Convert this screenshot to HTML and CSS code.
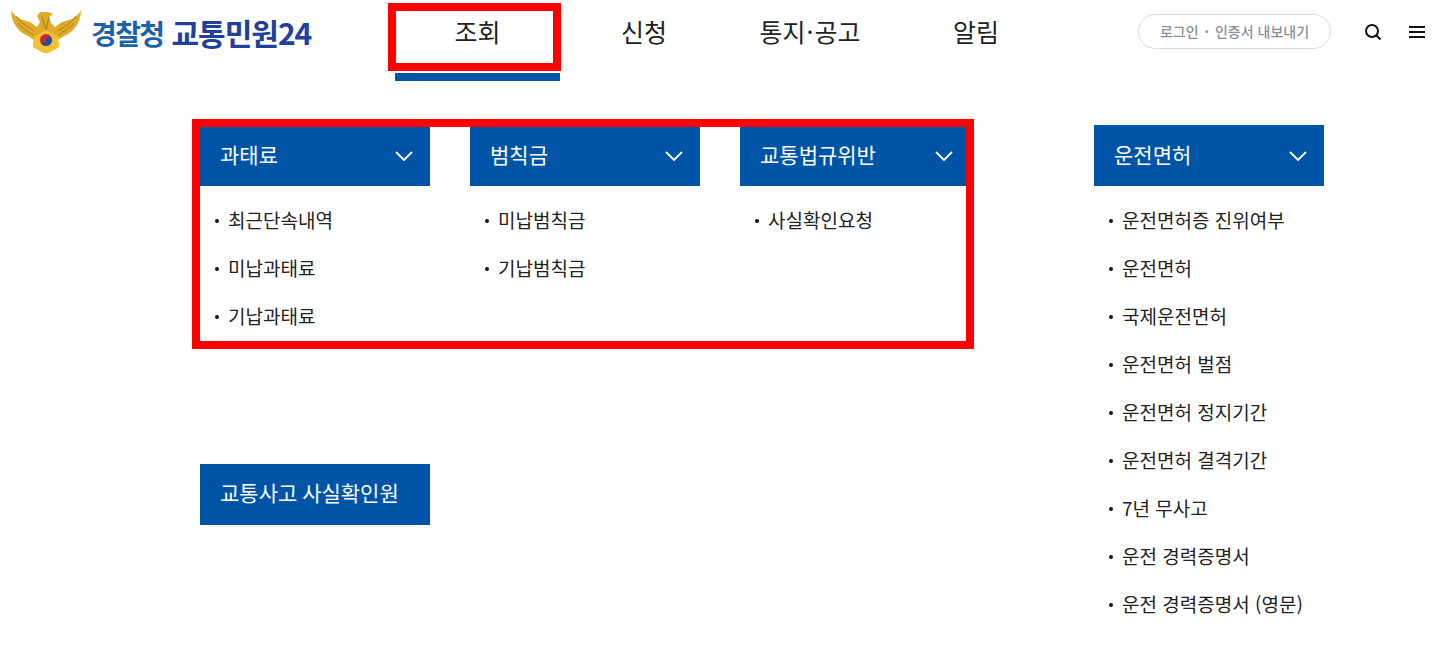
FILE: index.html
```html
<!DOCTYPE html>
<html lang="ko">
<head>
<meta charset="utf-8">
<title>경찰청 교통민원24</title>
<link rel="stylesheet" href="styles.css">
</head>
<body>
<header class="top">
  <a class="logo" href="#">
    <svg class="emblem" width="72" height="44" viewBox="0 0 72 44">
      <path d="M1 0 C4 7 12 10 20 12 L27 17 L30 12 L27 6 L30 2 L38 2 L43 4 L39 7 L41 13 L45 17 L52 12 C60 10 68 7 71 0 C71 12 64 22 54 26 L48 30 L49 37 L38 43 L34 43 L23 37 L24 30 L18 26 C8 22 1 12 1 0 Z" fill="#e0ab28"/>
      <path d="M6 6 C10 13 17 16 24 21 M66 6 C62 13 55 16 48 21 M8 13 C13 19 18 21 23 25 M64 13 C59 19 54 21 49 25 M32 7 L36 20 L39 7" fill="none" stroke="#a47c1c" stroke-width="1"/>
      <path d="M24 27 L36 20 L48 27 L49 37 L38 43 L34 43 L23 37 Z" fill="#f2c232"/>
      <circle cx="36" cy="30" r="6" fill="#c8283a"/>
      <path d="M30 30 A6 6 0 0 0 42 30 A3 3 0 0 0 36 30 A3 3 0 0 1 30 30 Z" fill="#1f4f9c"/>
    </svg>
    <span class="logo-a">경찰청</span>
    <span class="logo-b">교통민원24</span>
  </a>
  <nav class="gnb">
    <a class="gnb-item is-active" href="#">조회</a>
    <a class="gnb-item" href="#">신청</a>
    <a class="gnb-item" href="#">통지<span class="mid">·</span>공고</a>
    <a class="gnb-item" href="#">알림</a>
  </nav>
  <div class="utils">
    <a class="login" href="#">로그인 <i class="dot">·</i> 인증서 내보내기</a>
    <svg class="icon-search" width="18" height="18" viewBox="0 0 18 18"><circle cx="8" cy="8" r="6" fill="none" stroke="#111" stroke-width="2"/><path d="M12.5 12.5 L16.5 16.5" stroke="#111" stroke-width="2"/></svg>
    <svg class="icon-menu" width="16" height="14" viewBox="0 0 16 14"><path d="M0 2 H16 M0 7 H16 M0 12 H16" stroke="#111" stroke-width="2"/></svg>
  </div>
</header>
<main class="menu">
  <div class="group">
    <section class="col">
      <h2 class="col-head">과태료<svg class="chev" width="18" height="10" viewBox="0 0 18 10"><path d="M1 1 L9 9 L17 1" fill="none" stroke="#fff" stroke-width="1.8"/></svg></h2>
      <ul class="list">
        <li>최근단속내역</li>
        <li>미납과태료</li>
        <li>기납과태료</li>
      </ul>
    </section>
    <section class="col">
      <h2 class="col-head">범칙금<svg class="chev" width="18" height="10" viewBox="0 0 18 10"><path d="M1 1 L9 9 L17 1" fill="none" stroke="#fff" stroke-width="1.8"/></svg></h2>
      <ul class="list">
        <li>미납범칙금</li>
        <li>기납범칙금</li>
      </ul>
    </section>
    <section class="col col-narrow">
      <h2 class="col-head">교통법규위반<svg class="chev" width="18" height="10" viewBox="0 0 18 10"><path d="M1 1 L9 9 L17 1" fill="none" stroke="#fff" stroke-width="1.8"/></svg></h2>
      <ul class="list">
        <li>사실확인요청</li>
      </ul>
    </section>
    <a class="col-head col-single" href="#">교통사고 사실확인원</a>
  </div>
  <section class="col col-last">
    <h2 class="col-head">운전면허<svg class="chev" width="18" height="10" viewBox="0 0 18 10"><path d="M1 1 L9 9 L17 1" fill="none" stroke="#fff" stroke-width="1.8"/></svg></h2>
    <ul class="list">
      <li>운전면허증 진위여부</li>
      <li>운전면허</li>
      <li>국제운전면허</li>
      <li>운전면허 벌점</li>
      <li>운전면허 정지기간</li>
      <li>운전면허 결격기간</li>
      <li>7년 무사고</li>
      <li>운전 경력증명서</li>
      <li>운전 경력증명서 (영문)</li>
    </ul>
  </section>
</main>
<div class="mark mark-nav"></div>
<div class="mark mark-cols"></div>
</body>
</html>
```
FILE: styles.css
```css
* { box-sizing: border-box; }
html, body { margin: 0; padding: 0; }
body {
  width: 1443px;
  height: 649px;
  overflow: hidden;
  background: #fff;
  color: #222;
  font-family: "Noto Sans CJK KR", "Noto Sans", sans-serif;
  position: relative;
}
a { color: inherit; text-decoration: none; }
.top {
  display: flex;
  height: 81px;
  align-items: flex-start;
}
.logo {
  display: flex;
  width: 395px;
  padding: 10px 0 0 10px;
  align-items: baseline;
  font-weight: 700;
  line-height: 45px;
}
.emblem { flex: none; margin-right: 9px; align-self: flex-start; }
.logo-a { color: #1c62a8; margin-right: 8px; font-size: 28px; letter-spacing: -1.6px; }
.logo-b { color: #22409a; font-size: 30px; letter-spacing: -1px; }
.gnb { display: flex; }
.gnb-item {
  width: 166px;
  height: 81px;
  text-align: center;
  font-size: 25px;
  line-height: 62px;
  color: #222;
  font-weight: 400;
}
.mid { margin: 0 1px; }
.is-active { border-bottom: 8px solid #0054a6; width: 165px; margin-right: 1px; }
.utils {
  display: flex;
  align-items: center;
  margin-left: 79px;
  padding-top: 14px;
}
.login {
  width: 193px;
  height: 35px;
  border: 1px solid #d5dbe8;
  border-radius: 18px;
  text-align: center;
  font-size: 14px;
  line-height: 32px;
  color: #8a8f9a;
  font-weight: 500;
  white-space: pre;
}
.dot { font-style: normal; font-weight: 700; margin: 0 2px; }
.icon-search { margin-left: 33px; }
.icon-menu { margin-left: 27px; }
.menu {
  display: flex;
  padding: 44px 0 0 200px;
  align-items: flex-start;
}
.group {
  display: grid;
  grid-template-columns: 230px 230px 226px;
  column-gap: 40px;
  row-gap: 120px;
  width: 894px;
  grid-template-rows: 219px auto;
}
.col { width: 230px; }
.col-narrow { width: 226px; }
.col-narrow .col-head { padding-right: 13px; }
.col-head {
  display: flex;
  margin: 0;
  height: 61px;
  padding: 0 17px 4px 20px;
  align-items: center;
  justify-content: space-between;
  background: #0054a6;
  color: #fff;
  font-size: 21px;
  font-weight: 400;
}
.col-single { grid-column: 1; height: 61px; width: 230px; padding-bottom: 5px; word-spacing: -1px; }
.chev { flex: none; margin-top: 4px; }
.list {
  list-style: none;
  margin: 0;
  padding: 10px 0 0 28px;
}
.list li {
  position: relative;
  height: 48px;
  font-size: 19px;
  line-height: 48px;
  color: #222;
  white-space: nowrap;
}
.list li::before {
  content: "";
  position: absolute;
  left: -13px;
  top: 23px;
  width: 4px;
  height: 4px;
  border-radius: 50%;
  background: #111;
}
.mark {
  position: absolute;
  border: 8px solid #f00;
  pointer-events: none;
}
.mark-nav { left: 388px; top: 3px; width: 173px; height: 68px; }
.mark-cols { left: 192px; top: 119px; width: 782px; height: 230px; }
```
